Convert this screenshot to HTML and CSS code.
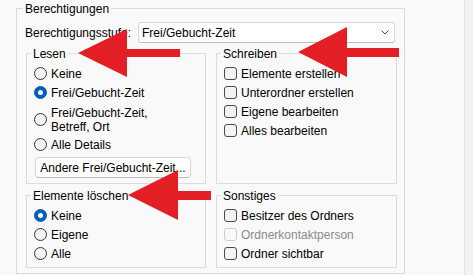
FILE: index.html
```html
<!DOCTYPE html>
<html lang="de">
<head>
    <meta charset="UTF-8">
    <meta name="viewport" content="width=device-width, initial-scale=1.0">
    <title>Berechtigungen</title>
    <link rel="stylesheet" href="styles.css">
</head>
<body>

    <div class="window">
        <div class="main">
            <div class="outer">
                <div class="legend">Berechtigungen</div>

                <div class="level-row">
                    <span class="level-label">Berechtigungsstufe:</span>
                    <div class="dropdown">
                        <span>Frei/Gebucht-Zeit</span>
                        <svg class="chevron" width="8" height="5" viewBox="0 0 8 5">
                            <polyline points="0.5,0.5 4,4 7.5,0.5" fill="none" stroke="#444" stroke-width="1"/>
                        </svg>
                    </div>
                </div>

                <div class="groups">
                    <div class="group">
                        <div class="group-title">Lesen</div>
                        <div class="options">
                            <div class="opt"><span class="radio"></span>Keine</div>
                            <div class="opt"><span class="radio checked"></span>Frei/Gebucht-Zeit</div>
                            <div class="opt multi"><span class="radio"></span><span>Frei/Gebucht-Zeit,<br>Betreff, Ort</span></div>
                            <div class="opt"><span class="radio"></span>Alle Details</div>
                        </div>
                        <button class="btn" type="button">Andere Frei/Gebucht-Zeit...</button>
                    </div>

                    <div class="group">
                        <div class="group-title">Schreiben</div>
                        <div class="options">
                            <div class="opt"><span class="check"></span>Elemente erstellen</div>
                            <div class="opt"><span class="check"></span>Unterordner erstellen</div>
                            <div class="opt"><span class="check"></span>Eigene bearbeiten</div>
                            <div class="opt"><span class="check"></span>Alles bearbeiten</div>
                        </div>
                    </div>

                    <div class="group">
                        <div class="group-title">Elemente löschen</div>
                        <div class="options">
                            <div class="opt"><span class="radio checked"></span>Keine</div>
                            <div class="opt"><span class="radio"></span>Eigene</div>
                            <div class="opt"><span class="radio"></span>Alle</div>
                        </div>
                    </div>

                    <div class="group">
                        <div class="group-title">Sonstiges</div>
                        <div class="options">
                            <div class="opt"><span class="check"></span>Besitzer des Ordners</div>
                            <div class="opt disabled"><span class="check"></span>Ordnerkontaktperson</div>
                            <div class="opt"><span class="check"></span>Ordner sichtbar</div>
                        </div>
                    </div>
                </div>
            </div>
        </div>
        <div class="strip"></div>
    </div>

    <!-- annotation arrows drawn over the dialog -->
    <svg class="arrows" width="473" height="275" viewBox="0 0 473 275">
        <polygon points="78,53 127,29 127,49 180,49 180,57 127,57 127,77" fill="#e31e24"/>
        <polygon points="298,52 347,27 347,48 399,48 399,57 347,57 347,77" fill="#e31e24"/>
        <polygon points="128,195 178,170 178,191 211,191 211,200 178,200 178,220" fill="#e31e24"/>
    </svg>

</body>
</html>
```
FILE: styles.css
```css
body {
    margin: 0;
    font-family: "Liberation Sans", Arial, sans-serif;
    font-size: 12px;
    color: #000;
    background-color: #f9f9f9;
    position: relative;
    overflow: hidden;
}

.window {
    display: flex;
    width: 473px;
    height: 275px;
}

.main {
    flex: 1;
    padding: 8px 0 0 16px;
}

.strip {
    width: 8px;
    background-color: #f1f1f1;
    border-left: 1px solid #e2e2e2;
}

.outer {
    box-sizing: border-box;
    width: 389px;
    height: 266px;
    border: 1px solid #dcdcdc;
    padding: 0 7px 0 9px;
}

.legend,
.group-title {
    display: table;
    margin-top: -8px;
    margin-left: -3px;
    padding: 0 2px;
    line-height: 16px;
    background-color: #f9f9f9;
}

.level-row {
    display: flex;
    align-items: center;
    margin-top: 5px;
    height: 21px;
}

.level-label {
    width: 113px;
    margin-left: -1px;
}

.dropdown {
    box-sizing: border-box;
    width: 257px;
    height: 21px;
    display: flex;
    align-items: center;
    justify-content: space-between;
    padding: 0 5px 0 3px;
    background-color: #fff;
    border: 1px solid #d6d6d6;
    border-bottom-color: #bdbdbd;
    border-radius: 3px;
}

.groups {
    display: grid;
    grid-template-columns: 180px 181px;
    grid-template-rows: 131px 73px;
    column-gap: 10px;
    row-gap: 11px;
    margin-top: 10px;
}

.group {
    box-sizing: border-box;
    border: 1px solid #dcdcdc;
    padding: 0 7px;
}

.options {
    margin-top: 2px;
}

.opt {
    display: flex;
    align-items: center;
    gap: 4px;
    height: 19px;
    white-space: nowrap;
}

.opt.multi {
    box-sizing: border-box;
    height: 33px;
    line-height: 14px;
    padding-top: 2px;
}

.opt.disabled {
    color: #8a8a8a;
}

.radio,
.check {
    box-sizing: border-box;
    flex: none;
    width: 13px;
    height: 13px;
    background-color: #f3f3f3;
    border: 1px solid #333;
}

.radio {
    border-radius: 50%;
}

.radio.checked {
    background-color: #005fb8;
    border-color: #005fb8;
    display: flex;
    align-items: center;
    justify-content: center;
}

.radio.checked::after {
    content: "";
    width: 5px;
    height: 5px;
    border-radius: 50%;
    background-color: #fff;
}

.check {
    border-radius: 3px;
    border-color: #4a4a4a;
}

.disabled .check {
    border-color: #cdcdcd;
    background-color: #f9f9f9;
}

.btn {
    box-sizing: border-box;
    display: block;
    width: 156px;
    height: 21px;
    margin: 3px 0 0 1px;
    padding: 0;
    font-family: inherit;
    font-size: 12px;
    color: #000;
    background-color: #fdfdfd;
    border: 1px solid #d6d6d6;
    border-bottom-color: #bcbcbc;
    border-radius: 4px;
}

.arrows {
    position: absolute;
    top: 0;
    left: 0;
    pointer-events: none;
}
```
